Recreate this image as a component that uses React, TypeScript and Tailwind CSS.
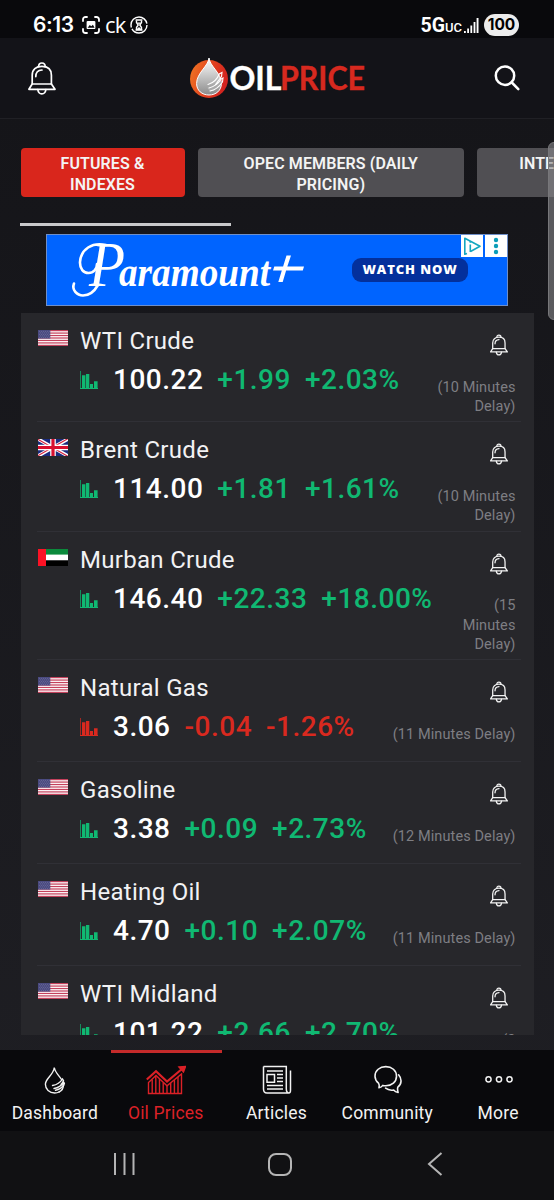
type Flag = 'us' | 'gb' | 'ae';

interface Quote {
  name: string;
  flag: Flag;
  price: string;
  change: string;
  percent: string;
  delay: string[];
}

const quotes: Quote[] = [
  { name: 'WTI Crude', flag: 'us', price: '100.22', change: '+1.99', percent: '+2.03%', delay: ['(10 Minutes', 'Delay)'] },
  { name: 'Brent Crude', flag: 'gb', price: '114.00', change: '+1.81', percent: '+1.61%', delay: ['(10 Minutes', 'Delay)'] },
  { name: 'Murban Crude', flag: 'ae', price: '146.40', change: '+22.33', percent: '+18.00%', delay: ['(15', 'Minutes', 'Delay)'] },
  { name: 'Natural Gas', flag: 'us', price: '3.06', change: '-0.04', percent: '-1.26%', delay: ['(11 Minutes Delay)'] },
  { name: 'Gasoline', flag: 'us', price: '3.38', change: '+0.09', percent: '+2.73%', delay: ['(12 Minutes Delay)'] },
  { name: 'Heating Oil', flag: 'us', price: '4.70', change: '+0.10', percent: '+2.07%', delay: ['(11 Minutes Delay)'] },
  { name: 'WTI Midland', flag: 'us', price: '101.22', change: '+2.66', percent: '+2.70%', delay: ['(2'] },
];

function BellIcon({ className, strokeWidth }: { className: string; strokeWidth: number }) {
  return (
    <svg viewBox="0 0 28 33" className={className} fill="none" stroke="currentColor" strokeWidth={strokeWidth} strokeLinejoin="round" strokeLinecap="round">
      <path d="M4.2 22V13.2C4.2 7.4 8 4.4 13.9 4.4s9.5 3 9.5 8.800V22z" />
      <path d="M4.2 22 .9 27.3H27L23.4 22" />
      <path d="M9.8 27.5c.4 3 1.8 4.4 4 4.4s3.7-1.4 4.1-4.4" />
      <path d="M10.6 4.7C10.6 2.2 11.8 1 13.9 1s3.3 1.2 3.3 3.7" />
      <path d="M7.8 14.6C7.8 10.4 10 8.2 14 8" />
    </svg>
  );
}

function FlagIcon({ flag }: { flag: Flag }) {
  if (flag === 'ae') {
    return (
      <svg viewBox="0 0 30 17" className="h-[17px] w-[30px]">
        <path fill="#0b8a3c" d="M0 0h30v6H0z" />
        <path fill="#fff" d="M0 5.6h30v6H0z" />
        <path fill="#000" d="M0 11.4h30V17H0z" />
        <path fill="#fb1225" d="M0 0h8v17H0z" />
      </svg>
    );
  }
  if (flag === 'gb') {
    return (
      <svg viewBox="0 0 30 17" className="h-[17px] w-[30px]">
        <path fill="#1b2b7e" d="M0 0h30v17H0z" />
        <path stroke="#fff" strokeWidth="3.4" d="M0 0l30 17M30 0L0 17" />
        <path stroke="#d5213c" strokeWidth="1.2" d="M0 .4l30 17M30 -.4L0 16.6" />
        <path stroke="#fff" strokeWidth="5.6" d="M15 0v17M0 8.5h30" />
        <path stroke="#d80f2f" strokeWidth="3.2" d="M15 0v17M0 8.5h30" />
      </svg>
    );
  }
  return (
    <svg viewBox="0 0 30 16" className="h-4 w-[30px]">
      <path fill="#fff" d="M0 0h30v16H0z" />
      {[0, 1, 2, 3, 4, 5, 6].map((i) => (
        <rect key={i} y={i * 2.46} width="30" height="1.23" fill="#c4415c" />
      ))}
      <path fill="#4a4a80" d="M0 0h12.3v8.6H0z" />
      <path stroke="#8585ad" strokeWidth=".6" strokeDasharray=".8 1.2" d="M1 1.4h11M2 2.9h10M1 4.4h11M2 5.9h10M1 7.4h11" />
    </svg>
  );
}

function ChartIcon() {
  return (
    <svg viewBox="0 0 18 18" className="h-[18px] w-[18px]" fill="currentColor">
      <path opacity=".7" d="M0 0h1v18H0z" />
      <path d="M0 17h18v1H0zM2 4.200h3.400V17H2zM6 3h3.300v14H6zM10 13h3v4h-3zM14 10.300h3.600V17H14z" />
    </svg>
  );
}

function StatusBar() {
  return (
    <div className="flex h-[38px] shrink-0 items-center bg-[#09090c] pt-3 pl-[33px] pr-[35px] text-white">
      <span className="w-[49px] font-['Inter'] text-[21px] font-semibold leading-6 tracking-[-0.4px]">6:13</span>
      <svg viewBox="0 0 18 18" className="h-[18px] w-[18px]" fill="none" stroke="#fff" strokeWidth="1.8" strokeLinecap="round">
        <path d="M1 5V3.5A2.5 2.5 0 0 1 3.5 1H5M13 1h1.5A2.5 2.5 0 0 1 17 3.5V5M17 13v1.5a2.5 2.5 0 0 1-2.5 2.5H13M5 17H3.5A2.5 2.5 0 0 1 1 14.5V13" />
        <rect x="4.6" y="4.9" width="8.8" height="8.2" rx="1.2" fill="#fff" stroke="none" />
        <path d="M5.600 11.700l2.200-2.600 1.500 1.100 1.600-1.500 1.700 3z" fill="#09090c" stroke="none" />
      </svg>
      <span className="ml-[5px] w-[21px] pb-[3px] font-['Open_Sans'] text-[22px] leading-6 tracking-[-0.8px]">ck</span>
      <svg viewBox="0 0 18 18" className="ml-1 h-[18px] w-[18px]" fill="none" stroke="#fff" strokeWidth="1.4">
        <circle cx="9" cy="9" r="8" strokeDasharray="21 1.5 26 1.6" />
        <path d="M5.600 4h6.800M5.600 14h6.800" strokeWidth="1.6" />
        <path d="M6.500 4.500v2L8.200 9l-1.700 2.500v2h5v-2L9.800 9l1.700-2.500v-2" />
        <path d="M7.300 6.500h3.400L9 8.500zM7 13l2-2 2 2z" fill="#fff" stroke="none" />
      </svg>
      <div className="ml-auto flex items-center">
        <span className="pt-px font-['Roboto'] text-[19.5px] font-bold leading-6">5G</span>
        <span className="w-[19px] pt-[5px] font-['Roboto'] text-[13px] font-medium leading-5">UC</span>
        <svg viewBox="0 0 15 15" className="h-[15px] w-[15px]" fill="#fff">
          <path d="M0 13h1.800v2H0zM3.200 10.500H5V15H3.200zM6.400 7.500h1.800V15H6.400zM9.600 4h1.800v11H9.600zM12.600 0h1.900v15h-1.900z" />
        </svg>
        <span className="ml-[5px] flex h-[22px] w-[35px] items-center justify-center rounded-full bg-[#ececec] font-['Inter'] text-[15.5px] font-bold text-black">100</span>
      </div>
    </div>
  );
}

function Logo() {
  return (
    <svg viewBox="0 0 178 40" className="h-10 w-[178px]">
      <defs>
        <linearGradient id="disc" x1="0" x2="1" y1="0" y2=".3">
          <stop offset="0" stopColor="#ef7a24" />
          <stop offset=".6" stopColor="#e2401f" />
          <stop offset="1" stopColor="#d3241f" />
        </linearGradient>
        <linearGradient id="drop" x1="0" x2="0" y1="0" y2="1">
          <stop offset="0" stopColor="#fff" />
          <stop offset="1" stopColor="#8b8b8b" />
        </linearGradient>
      </defs>
      <circle cx="19" cy="21" r="19" fill="url(#disc)" />
      <path d="M19 0C18.400 8 6.600 15 6.600 25.500 6.600 32.500 12 37 19 37s12.400-4.500 12.400-11.500C31.400 15 19.600 8 19 0z" fill="url(#drop)" stroke="#fff" strokeWidth="1" />
      <path d="M17 29.500c5-1 9.500-4.500 12.500-9 1.500.5 1.500 2 .5 3.500 1.700-1 2.700.3 1.700 2-2.700 4.500-6.200 6.500-11.700 7.500" fill="#aaa" />
      <path d="M18 26.500c5-1.500 9-4.500 11.200-10.500l2.800-1.500-.5 4-6 8M19 30c5-1.300 9-3.800 12.200-9l1.800-1-.5 4c-3 4.500-7 8-12.500 9" fill="none" stroke="#fff" strokeWidth="1.1" strokeLinecap="round" />
      <text x="39.5" y="32" fill="#fff" stroke="#fff" strokeWidth=".4" fontFamily="Lato" fontWeight="bold" fontSize="33" textLength="52" lengthAdjust="spacingAndGlyphs">OIL</text>
      <text x="90" y="32" fill="#d7291f" stroke="#d7291f" strokeWidth=".4" fontFamily="Lato" fontWeight="bold" fontSize="33" textLength="85" lengthAdjust="spacingAndGlyphs">PRICE</text>
    </svg>
  );
}

function Header() {
  return (
    <header className="flex h-[81px] shrink-0 items-center justify-between border-b border-[#202025] bg-[#131318] pl-7 pr-[34px] text-white">
      <BellIcon className="h-[33px] w-7" strokeWidth={1.7} />
      <div className="ml-[8px]"><Logo /></div>
      <svg viewBox="0 0 26 26" className="h-[26px] w-[26px]" fill="none" stroke="currentColor" strokeWidth="2.5" strokeLinecap="round">
        <circle cx="11" cy="10.7" r="9.2" />
        <path d="M17.8 17.5l6.500 6.600" />
      </svg>
    </header>
  );
}

function Tabs() {
  const base = 'flex h-[49px] shrink-0 items-center justify-center rounded-[4px] pt-[2px] text-center text-[16px] font-semibold leading-[21px] tracking-[0.1px] text-[#f4f4f4]';
  return (
    <div className="flex shrink-0 gap-[13px] overflow-hidden pl-[20.5px] pt-[29px]">
      <div className={`${base} w-[164px] bg-[#d9261c]`}>FUTURES &amp;<br />INDEXES</div>
      <div className={`${base} w-[266.5px] bg-[#504f53]`}>OPEC MEMBERS (DAILY<br />PRICING)</div>
      <div className={`${base} w-[208px] bg-[#504f53]`}>INTERNATIONAL<br />PRICES</div>
    </div>
  );
}

function AdBanner() {
  return (
    <div className="relative ml-[46px] mt-[8px] flex h-[72px] w-[462px] shrink-0 items-center border border-[#6f8fc8] bg-[#0064ff]">
      <svg viewBox="0 0 260 70" className="h-[70px] w-[260px]" fill="#fff" fontFamily="Liberation Serif" fontStyle="italic">
        <text x="42" y="51" fontSize="64" textLength="36" lengthAdjust="spacingAndGlyphs">P</text>
        <text x="72" y="51" fontSize="42" fontWeight="bold" textLength="151" lengthAdjust="spacingAndGlyphs">aramount</text>
        <g fill="none" stroke="#fff" strokeWidth="2.6" strokeLinecap="round">
          <path d="M59 10C45 7 34 14 33 27c-.3 7 3.500 11 8.500 11S50 34 50 29" />
          <path d="M51 50C47 57 42 60.500 36 60.500S24.500 55 27 48.500" />
        </g>
        <path d="M239.500 20.500h4.500l-3.700 11H257l-1.200 4h-16.700l-3.400 11.500h-4.400l3.500-11.500h-8.800l1.300-4h8.800z" />
      </svg>
      <span className="ml-[45px] flex h-6 w-[116px] items-center justify-center rounded-[9px] bg-[#03309c] font-['Open_Sans'] text-[13px] font-extrabold tracking-[0.9px] text-white">WATCH NOW</span>
      <div className="absolute right-0 top-0 flex gap-[2px]">
        <svg viewBox="0 0 22 22" className="h-[22px] w-[22px] bg-white" fill="none" stroke="#14a7c0" strokeWidth="1.6" strokeLinejoin="round">
          <path d="M6 18.500l-2.200.8V3.300L19 11.300 9.500 16.500" />
          <path d="M9.300 9.500v7.500M9.300 6v1.700" />
        </svg>
        <svg viewBox="0 0 22 22" className="h-[22px] w-[22px] bg-white" fill="#0b9db8">
          <circle cx="11" cy="5" r="2.2" />
          <circle cx="11" cy="11" r="2.2" />
          <circle cx="11" cy="17" r="2.2" />
        </svg>
      </div>
    </div>
  );
}

function QuoteRow({ quote }: { quote: Quote }) {
  const color = quote.change.startsWith('-') ? 'text-[#d9291f]' : 'text-[#10b872]';
  return (
    <div className="mr-[13px] ml-4 flex min-h-[102px] shrink-0 border-b border-[#303036] pb-[5px] pl-px">
      <div className="w-[42.5px] shrink-0 pt-[17px]">
        <FlagIcon flag={quote.flag} />
      </div>
      <div className="shrink-0 pt-[10px]">
        <div className="text-2xl leading-9 tracking-[0.3px] text-[#f2f2f4]">{quote.name}</div>
        <div className={`mt-px flex items-center text-[28px] font-medium leading-10 tracking-[0.5px] ${color}`}>
          <ChartIcon />
          <span className="ml-[15px] text-white">{quote.price}</span>
          <span className="ml-[14px]">{quote.change}</span>
          <span className="ml-[14px]">{quote.percent}</span>
        </div>
      </div>
      <div className="ml-auto flex flex-col items-end pr-[5px] pt-[21px]">
        <BellIcon className="mr-[8px] h-[22px] w-[18px] text-[#f2f2f2]" strokeWidth={2} />
        <div className="mt-[21.9px] text-right text-[14.5px] leading-[19.2px] tracking-[0.1px] text-[#7e7e83]">
          {quote.delay.map((line) => (
            <div key={line}>{line}</div>
          ))}
        </div>
      </div>
    </div>
  );
}

function BottomNav() {
  const item = 'flex w-0 flex-1 flex-col items-center border-t-[3px] pt-[12px]';
  const label = 'mt-[6px] -ml-px text-[17.5px] leading-6 tracking-[0.2px]';
  return (
    <nav className="flex h-[81px] shrink-0 bg-[#09090c] text-[#f2f2f2]">
      <div className={`${item} border-transparent`}>
        <svg viewBox="0 0 22 30" className="h-[30px] w-[22px]" fill="none" stroke="currentColor" strokeWidth="1.4" strokeLinecap="round">
          <path d="M15 27c-1.200.7-2.700 1-4.300 1C5.400 28 1.400 24.500 1.400 19.300 1.400 13.500 9.500 10 10.300 2.500c.8 5 4.700 8 7.200 12" />
          <path d="M8.500 20.500c4-.7 7.500-2.500 10-6.500l1 1.500c-.5 1.700-1.500 3-2.500 4M10 23.500c3.500-.7 7.200-2.500 10-6 .7.7.4 1.700-.2 2.500-2 3-4.500 4.500-8.300 5.300" />
          <path d="M19.500 20c0 3.300-1.700 5.700-4.500 7" />
        </svg>
        <span className={label}>Dashboard</span>
      </div>
      <div className={`${item} border-[#c42a2a] text-[#dc2127]`}>
        <svg viewBox="0 0 40 30" className="h-[30px] w-10" fill="none" stroke="currentColor" strokeWidth="1.4">
          <path strokeWidth="2.2" d="M.8 14.500L10 6.300l11 10.200L36.500 3.500" />
          <path fill="currentColor" d="M33 2l6.500-.5L37.500 7z" />
          <path d="M2.500 28.500V17.500l7.500-7 11 10.200L35.500 9v19.500z" />
          <path d="M6.200 14.500v14M9.800 11v17.500M13.500 14v14.500M17.200 17.500v11M21 20.500v8M24.700 18v10.500M28.400 15v13.500M32 12v16.500" />
        </svg>
        <span className={label}>Oil Prices</span>
      </div>
      <div className={`${item} border-transparent`}>
        <svg viewBox="0 0 30 30" className="h-[30px] w-[30px]" fill="none" stroke="currentColor" strokeWidth="1.5">
          <path d="M1.500 1.500h22.800v22c0 3 1.200 4.500 2.700 4.500s1.500-1 1.500-3V5.500M27 28H5c-2.500 0-3.500-1.500-3.500-4V1.500" />
          <path d="M5 9.500h7.500v7.800H5zM5 6h16M15 9.500h6M15 13h6M15 16.500h6M5 20.500h16M5 24h16" />
        </svg>
        <span className={label}>Articles</span>
      </div>
      <div className={`${item} border-transparent`}>
        <svg viewBox="0 0 28 30" className="h-[30px] w-7" fill="none" stroke="currentColor" strokeWidth="1.6" strokeLinejoin="round" strokeLinecap="round">
          <path d="M5 22.800c.5-2 .5-3.300-.5-4.700C2.300 16.300 1 13.800 1 11.200 1 5.500 5.800 1.600 11.800 1.600S22.500 5.500 22.500 11.200s-4.700 9.600-10.700 9.600c-1 0-2-.1-3-.4-1 1.400-2.300 2.200-3.800 2.400z" />
          <path d="M24.600 9.800c3.500 4 3.200 9.500-.8 12.400-.6 1.900-.2 3.500.3 5.300-2-.3-3.500-1.200-4.500-2.500-3 .5-6-.2-8-1.800" />
        </svg>
        <span className={label}>Community</span>
      </div>
      <div className={`${item} border-transparent`}>
        <svg viewBox="0 0 28 30" className="h-[30px] w-7" fill="none" stroke="currentColor" strokeWidth="1.5">
          <circle cx="3.5" cy="14.3" r="2.6" />
          <circle cx="14" cy="14.3" r="2.6" />
          <circle cx="24.5" cy="14.3" r="2.6" />
        </svg>
        <span className={label}>More</span>
      </div>
    </nav>
  );
}

function SystemNav() {
  return (
    <div className="flex h-[69px] shrink-0 items-center justify-between bg-[#111113] pb-[3px] pl-[113px] pr-[111px] text-[#b5b5b5]">
      <svg viewBox="0 0 24 24" className="h-6 w-6" stroke="currentColor" strokeWidth="2">
        <path d="M2 1v22M11.5 1v22M20.5 1v22" />
      </svg>
      <div className="mr-[5px] h-[23px] w-6 rounded-[8px] border-2 border-current" />
      <svg viewBox="0 0 16 24" className="h-6 w-4" fill="none" stroke="currentColor" strokeWidth="2">
        <path d="M14.5 1L2 12l12.500 11" />
      </svg>
    </div>
  );
}

export default function App() {
  return (
    <div className="relative flex h-[1200px] w-[554px] flex-col overflow-hidden bg-[#141418] bg-linear-to-b from-[#141418] to-[#1f1f24] font-['Roboto',sans-serif]">
      <StatusBar />
      <Header />
      <Tabs />
      <div className="ml-5 mt-[26px] h-[3px] w-[211px] shrink-0 bg-[#c9c9cb]" />
      <AdBanner />
      <main className="mb-[15px] ml-[20.5px] mt-[7px] flex h-[722px] w-[513px] shrink-0 flex-col overflow-hidden bg-[#27272b]">
        {quotes.map((quote) => (
          <QuoteRow key={quote.name} quote={quote} />
        ))}
      </main>
      <BottomNav />
      <SystemNav />
      {/* edge panel handle */}
      <div className="absolute left-[548px] top-[142px] h-[178px] w-3 rounded-[6px] border border-[#77777a] bg-[#88888c]/60" />
    </div>
  );
}
